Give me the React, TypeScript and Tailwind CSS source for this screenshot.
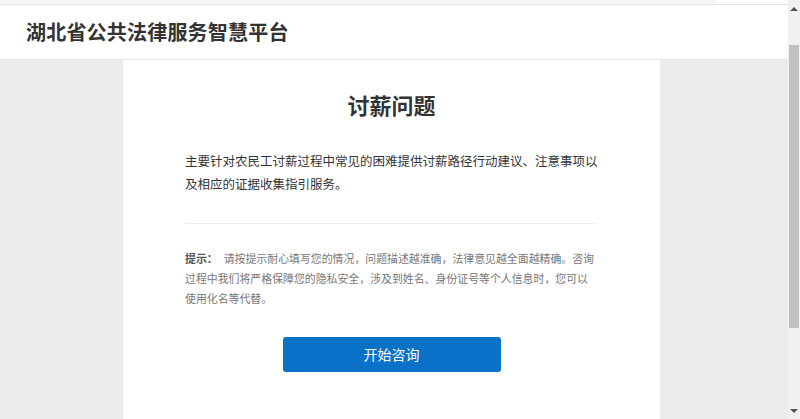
const FONT = "font-['Microsoft_YaHei','Noto_Sans_CJK_SC',sans-serif]";

function Scrollbar() {
    return (
        <div className="flex w-[12px] flex-col bg-[#f1f1f1]">
            <div className="flex h-[17px] items-center justify-center">
                <div className="h-0 w-0 border-x-[4px] border-b-[4px] border-x-transparent border-b-[#505050]"></div>
            </div>
            <div className="h-[28px]"></div>
            <div className="mx-[1px] h-[283px] bg-[#c1c1c1]"></div>
            <div className="flex-1"></div>
            <div className="flex h-[17px] items-center justify-center">
                <div className="h-0 w-0 border-x-[4px] border-t-[4px] border-x-transparent border-t-[#505050]"></div>
            </div>
        </div>
    );
}

function App() {
    return (
        <div className={`flex h-[419px] w-[800px] overflow-hidden bg-white ${FONT}`}>
            <div className="flex flex-1 flex-col">
                {/* top strip */}
                <div className="flex h-[5px] border-b border-[#e3e3e3] bg-white">
                    <div className="w-[717px] rounded-br-[6px] bg-[#f4f4f4]"></div>
                </div>

                {/* HEADER */}
                <header className="flex h-[55px] items-center border-b border-[#e6e6e6] bg-white pl-[26px]">
                    <h1 className="text-[20px] font-bold tracking-[0.2px] text-[#333]">
                        湖北省公共法律服务智慧平台
                    </h1>
                </header>

                {/* BODY */}
                <main className="flex-1 bg-[#ececec] pl-[123px]">
                    <section className="h-full w-[537px] bg-white px-[62px] pt-[29px]">
                        <h2 className="text-center text-[22px] font-bold leading-[30px] text-[#333]">
                            讨薪问题
                        </h2>

                        <p className="mt-[30px] text-[12.5px] leading-[23px] text-[#333]">
                            主要针对农民工讨薪过程中常见的困难提供讨薪路径行动建议、注意事项以及相应的证据收集指引服务。
                        </p>

                        <div className="mt-[28px] h-px bg-[#eeeeee]"></div>

                        <p className="mt-[24px] text-[10.9px] leading-[20px] text-[#777]">
                            <b className="pr-[6px] font-bold text-[#555]">提示：</b>请按提示耐心填写您的情况，问题描述越准确，法律意见越全面越精确。咨询过程中我们将严格保障您的隐私安全，涉及到姓名、身份证号等个人信息时，您可以使用化名等代替。
                        </p>

                        <div className="mt-[29px] flex justify-center">
                            <button className="h-[35px] w-[218px] rounded-[3px] bg-[#0a71c8] text-[14px] text-white">
                                开始咨询
                            </button>
                        </div>
                    </section>
                </main>
            </div>
            <Scrollbar />
        </div>
    );
}

export default App;
